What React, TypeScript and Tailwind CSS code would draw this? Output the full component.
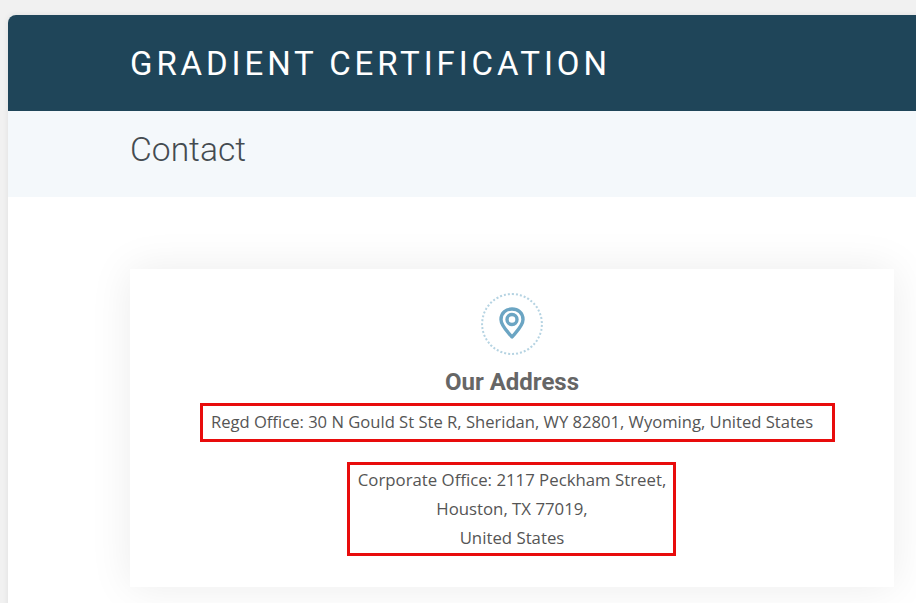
import React from "react";

const App = () => {
  return (
    <div className="h-[603px] w-[916px] overflow-hidden bg-[#f1f1f1] pl-2 pt-[15px]">
      <div className="h-[700px] w-[1000px] overflow-hidden rounded-tl-lg bg-white shadow-[0_0_6px_rgba(0,0,0,0.08)]">
        <header className="flex h-24 items-center bg-[#1f4559] pl-[122px]">
          <h1 className="font-['Roboto',sans-serif] text-[33px] leading-none font-normal tracking-[3.9px] text-white">
            GRADIENT CERTIFICATION
          </h1>
        </header>
        <div className="flex h-[86px] items-center bg-[#f4f8fb] pb-2 pl-[122px]">
          <h2 className="font-['Roboto',sans-serif] text-[33.6px] leading-none font-light text-[#444b50]">
            Contact
          </h2>
        </div>
        <section className="pt-[72px] pl-[122px]">
          <div className="flex h-[318px] w-[764px] flex-col items-center bg-white pt-6 font-['Open_Sans',sans-serif] text-[#555] shadow-[0_0_40px_rgba(0,0,0,0.08)]">
            <div className="flex size-[62px] items-center justify-center rounded-full border-2 border-dotted border-[#b5d3e2] pb-[2px]">
              <svg width="26" height="32" viewBox="0 0 26 32" fill="none" stroke="#6ba5c3" strokeWidth="3.4">
                <path d="M13 30 C9 25 2 19 2 12.5 C2 6 7 2 13 2 C19 2 24 6 24 12.5 C24 19 17 25 13 30 Z" strokeLinejoin="round" />
                <circle cx="13" cy="12.5" r="5" />
              </svg>
            </div>
            <h3 className="mt-3 font-['Roboto',sans-serif] text-[24px] leading-[30px] font-bold text-[#666]">
              Our Address
            </h3>
            <p className="mt-[6px] ml-[11px] border-[3px] border-[#e80c0c] pr-[19px] pb-px pl-2 text-[16.6px] leading-[32px] whitespace-nowrap">
              Regd Office: 30 N Gould St Ste R, Sheridan, WY 82801, Wyoming, United States
            </p>
            <p className="mt-5 mr-px border-[3px] border-[#e80c0c] pr-[7px] pb-px pl-2 text-center text-[16.8px] leading-[29px] whitespace-nowrap">
              Corporate Office: 2117 Peckham Street,
              <br />
              Houston, TX 77019,
              <br />
              United States
            </p>
          </div>
        </section>
      </div>
    </div>
  );
};

export default App;
